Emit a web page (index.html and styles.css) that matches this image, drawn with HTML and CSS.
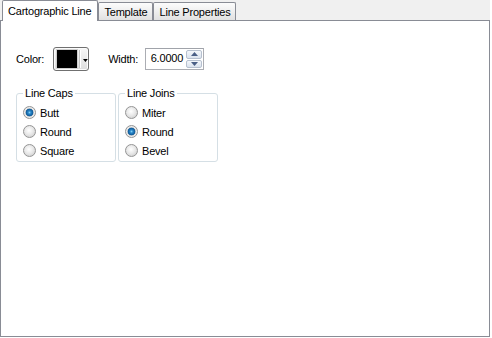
FILE: index.html
```html
<!DOCTYPE html>
<html lang="en">
  <head>
    <meta charset="UTF-8" />
    <title>Cartographic Line</title>
    <link rel="stylesheet" href="styles.css">
  </head>
  <body>
    <div class="tabctl">
      <div class="tabbar">
        <div class="tab tab-active">Cartographic Line</div>
        <div class="tab">Template</div>
        <div class="tab">Line Properties</div>
      </div>
      <div class="panel">
        <div class="row">
          <span class="lbl">Color:</span>
          <button type="button" class="color-btn">
            <span class="swatch"></span>
            <span class="sep"></span>
            <svg class="drop" width="5" height="3" viewBox="0 0 5 3"><path d="M0 0h5L2.5 3z" fill="#000"/></svg>
          </button>
          <span class="lbl lbl-width">Width:</span>
          <div class="spin">
            <span class="spin-val">6.0000</span>
            <div class="spin-btns">
              <button type="button" class="spin-btn">
                <svg width="7" height="4" viewBox="0 0 7 4"><path d="M0 4L3.5 0 7 4z" fill="#4a5f86"/></svg>
              </button>
              <button type="button" class="spin-btn">
                <svg width="7" height="4" viewBox="0 0 7 4"><path d="M0 0h7L3.5 4z" fill="#4a5f86"/></svg>
              </button>
            </div>
          </div>
        </div>

        <div class="groups">
          <fieldset class="group">
            <legend>Line Caps</legend>
            <label class="opt"><input type="radio" name="caps" checked />Butt</label>
            <label class="opt"><input type="radio" name="caps" />Round</label>
            <label class="opt"><input type="radio" name="caps" />Square</label>
          </fieldset>
          <fieldset class="group">
            <legend>Line Joins</legend>
            <label class="opt"><input type="radio" name="joins" />Miter</label>
            <label class="opt"><input type="radio" name="joins" checked />Round</label>
            <label class="opt"><input type="radio" name="joins" />Bevel</label>
          </fieldset>
        </div>
      </div>
    </div>
  </body>
</html>
```

FILE: styles.css
```css
body {
  margin: 0;
  background-color: #fff;
  font-family: "Liberation Sans", Arial, sans-serif;
  font-size: 11px;
  letter-spacing: -0.2px;
  color: #000;
}

.tabctl {
  width: 490px;
}

.tabbar {
  display: flex;
  align-items: flex-end;
  height: 20px;
  padding-left: 2px;
  background-color: #f0f0f0;
  border-bottom: 1px solid #898c95;
}

.tab {
  height: 17px;
  line-height: 18px;
  padding: 0 5px;
  border: 1px solid #898c95;
  border-bottom: none;
  border-radius: 2px 2px 0 0;
  background: linear-gradient(#fcfcfc, #e1e1e1);
  white-space: nowrap;
}

.tab-active {
  height: 20px;
  line-height: 20px;
  padding: 0 6px 0 5px;
  margin-bottom: -1px;
  background: #fff;
}

.panel {
  box-sizing: border-box;
  height: 316px;
  padding: 26px 0 0 15px;
  border: 1px solid #898c95;
  border-top: none;
  background-color: #fff;
}

.row {
  display: flex;
  align-items: center;
  height: 24px;
}

.color-btn {
  display: flex;
  align-items: center;
  box-sizing: border-box;
  width: 36px;
  height: 24px;
  margin-left: 9px;
  padding: 0 0 0 3px;
  border: 1px solid #707070;
  border-radius: 3px;
  background: linear-gradient(#f7f7f7, #dddddd);
  box-shadow: inset 0 0 0 1px #fcfcfc;
}

.swatch {
  width: 21px;
  height: 18px;
  background-color: #000;
  box-shadow: 0 0 0 1px #cfcfcf;
}

.sep {
  width: 1px;
  height: 18px;
  margin: 0 3px 0 2px;
  background-color: #c4c4c4;
  box-shadow: 1px 0 0 #fff;
}

.drop {
  display: block;
  margin-top: 2px;
}

.lbl-width {
  margin-left: 19px;
}

.spin {
  display: flex;
  box-sizing: border-box;
  width: 59px;
  height: 22px;
  margin-left: 7px;
  padding: 1px;
  border: 1px solid #abadb3;
  border-top-color: #a0a3aa;
  background-color: #fff;
}

.spin-val {
  flex: 1;
  padding-right: 3px;
  line-height: 17px;
  text-align: right;
}

.spin-btns {
  display: flex;
  flex-direction: column;
  gap: 1px;
  width: 16px;
}

.spin-btn {
  flex: 1;
  display: flex;
  align-items: center;
  justify-content: center;
  padding: 0;
  border: 1px solid #b6c0cf;
  border-radius: 2px;
  background: linear-gradient(#f4f7fb, #dbe3ee);
}

.spin-btn svg {
  display: block;
}

.groups {
  display: flex;
  gap: 2px;
  margin-top: 16px;
}

.group {
  box-sizing: border-box;
  width: 100px;
  margin: 0;
  padding: 4px 6px 1px 6px;
  border: 1px solid #d5dfe5;
  border-radius: 3px;
}

.group legend {
  padding: 0 2px;
  line-height: 12px;
}

.opt {
  display: flex;
  align-items: center;
  height: 19px;
}

.opt input {
  appearance: none;
  width: 13px;
  height: 13px;
  margin: 0 4px 0 0;
  border: 1px solid #959595;
  border-radius: 50%;
  background: radial-gradient(circle at 45% 40%, #ffffff 0, #e9e9e9 45%, #c6c6c6 100%);
}

.opt input:checked {
  background: radial-gradient(circle, #7fd0f5 0, #2a86c8 1.5px, #0f5a98 3.5px, #d8d8d8 4.2px, #eeeeee 5px, #c6c6c6 100%);
}
```
